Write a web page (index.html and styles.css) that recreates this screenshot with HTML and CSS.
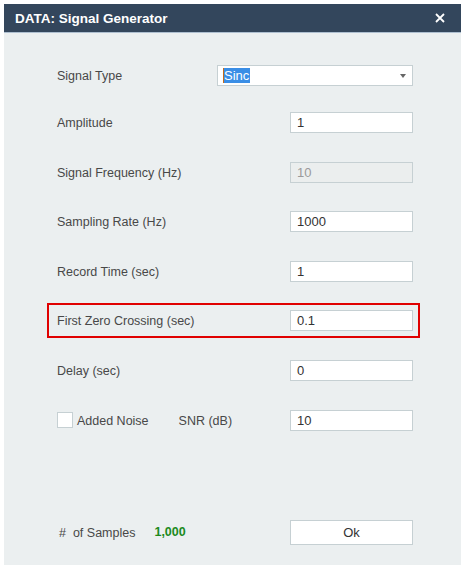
FILE: index.html
```html
<!DOCTYPE html>
<html>
<head>
<meta charset="utf-8">
<link rel="stylesheet" href="styles.css">
</head>
<body>
<div class="window">
  <div class="titlebar">
    <span class="title">DATA: Signal Generator</span>
    <span class="close">
      <svg width="10" height="10" viewBox="0 0 10 10"><path d="M1 1 L9 9 M9 1 L1 9" stroke="#ffffff" stroke-width="1.8" fill="none"/></svg>
    </span>
  </div>
  <div class="content">
    <div class="row first">
      <span class="label">Signal Type</span>
      <div class="select">
        <span class="sel-text"><span class="caret"></span>Sinc</span>
        <span class="arrow"></span>
      </div>
    </div>
    <div class="rows">
      <div class="row">
        <span class="label">Amplitude</span>
        <div class="input">1</div>
      </div>
      <div class="row">
        <span class="label">Signal Frequency (Hz)</span>
        <div class="input disabled">10</div>
      </div>
      <div class="row">
        <span class="label">Sampling Rate (Hz)</span>
        <div class="input">1000</div>
      </div>
      <div class="row">
        <span class="label">Record Time (sec)</span>
        <div class="input">1</div>
      </div>
      <div class="row highlight">
        <span class="label">First Zero Crossing (sec)</span>
        <div class="input">0.1</div>
      </div>
      <div class="row">
        <span class="label">Delay (sec)</span>
        <div class="input">0</div>
      </div>
      <div class="row">
        <span class="check"></span>
        <span class="label noise">Added Noise</span>
        <span class="label snr">SNR (dB)</span>
        <div class="input">10</div>
      </div>
    </div>
    <div class="footer">
      <span class="label samples">#&nbsp; of Samples</span>
      <span class="count">1,000</span>
      <div class="button">Ok</div>
    </div>
  </div>
</div>
</body>
</html>
```
FILE: styles.css
```css
html, body {
  margin: 0;
  padding: 0;
  background: #ffffff;
}
body {
  font-family: "Liberation Sans", Arial, sans-serif;
  font-size: 12.5px;
  color: #484848;
}
.window {
  margin: 4px 0 0 4px;
  width: 457px;
  height: 561px;
  background: #ebeff0;
  display: flex;
  flex-direction: column;
}
.titlebar {
  height: 28px;
  background: #33465c;
  border-bottom: 1px solid #aebfd0;
  display: flex;
  align-items: center;
  justify-content: space-between;
  padding: 0 16px 0 11px;
}
.title {
  color: #ffffff;
  font-weight: bold;
  font-size: 13.5px;
}
.close {
  display: flex;
  align-items: center;
}
.content {
  padding: 32px 48px 0 53px;
  display: flex;
  flex-direction: column;
}
.row {
  display: flex;
  align-items: center;
  height: 21px;
}
.row.first {
  margin-bottom: 26px;
}
.rows {
  display: flex;
  flex-direction: column;
  gap: 28.6px;
}
.label {
  color: #484848;
  padding-top: 1px;
}
.select {
  margin-left: auto;
  width: 189px;
  height: 19px;
  background: #ffffff;
  border: 1px solid #c6d0d3;
  display: flex;
  align-items: center;
  justify-content: space-between;
  padding-left: 5px;
  box-sizing: content-box;
}
.sel-text {
  display: flex;
  align-items: center;
  background: #3a8ee6;
  color: #ffffff;
  height: 15px;
  line-height: 15px;
  padding-right: 1px;
  font-size: 13px;
}
.caret {
  width: 1px;
  height: 15px;
  background: #c46a1c;
}
.arrow {
  width: 0;
  height: 0;
  border-left: 3.5px solid transparent;
  border-right: 3.5px solid transparent;
  border-top: 4px solid #666666;
  margin-right: 6px;
}
.input {
  margin-left: auto;
  width: 115px;
  height: 19px;
  line-height: 20px;
  background: #ffffff;
  border: 1px solid #c6d0d3;
  padding-left: 6px;
  color: #333333;
  font-size: 13px;
}
.input.disabled {
  background: #ebeeee;
  color: #9a9a9a;
}
.row.highlight {
  border: 2px solid #e00000;
  margin: -7px -7px -7px -10px;
  padding: 5px 5px 5px 8px;
}
.check {
  width: 14px;
  height: 14px;
  background: #ffffff;
  border: 1px solid #c6d0d3;
  margin-right: 4px;
}
.snr {
  margin-left: 30px;
}
.footer {
  margin-top: 89px;
  display: flex;
  align-items: center;
  height: 25px;
  padding-left: 2px;
}
.count {
  margin-left: 19px;
  color: #1c8a1c;
  font-weight: bold;
}
.button {
  margin-left: auto;
  width: 121px;
  height: 23px;
  line-height: 23px;
  text-align: center;
  background: #ffffff;
  border: 1px solid #c6d0d3;
  color: #333333;
  font-size: 13px;
}
```
